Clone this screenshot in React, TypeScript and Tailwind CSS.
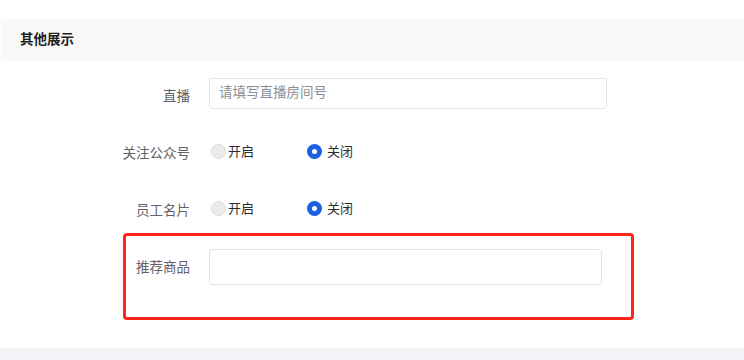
import React from 'react';

const font = { fontFamily: '"Liberation Sans", "Noto Sans CJK SC", sans-serif' };

function Radio({ checked, label }: { checked: boolean; label: string }) {
  return (
    <div className="flex items-center">
      {checked ? (
        <span className="w-[15px] h-[15px] rounded-full bg-[#1b5fe3] flex items-center justify-center">
          <span className="w-[5px] h-[5px] rounded-full bg-white" />
        </span>
      ) : (
        <span className="w-[15px] h-[15px] rounded-full bg-[#ebebec] border border-[#dcdcde]" />
      )}
      <span className={`text-[13px] text-[#2b2b2b] leading-none ${checked ? 'ml-[5px]' : 'ml-[2px]'}`}>{label}</span>
    </div>
  );
}

function Label({ text, className = '' }: { text: string; className?: string }) {
  return (
    <div className={`w-[190px] shrink-0 text-right text-[13.5px] text-[#5f6166] leading-none ${className}`}>{text}</div>
  );
}

export default function App() {
  return (
    <div className="w-[744px] h-[360px] bg-white overflow-hidden pt-[19px] flex flex-col" style={font}>
      <div className="h-[42px] ml-[1px] bg-[#f8f8f8] flex items-center pl-[19px]">
        <span className="text-[13.5px] font-bold text-[#1f1f1f]">其他展示</span>
      </div>

      <div className="mt-[17px] h-[31px] flex items-center">
        <Label text="直播" className="mt-[7px]" />
        <div className="ml-[19px] w-[398px] h-[31px] border border-[#e4e6eb] rounded-[3px] flex items-center pl-[9px]">
          <span className="text-[13.5px] text-[#8c8f94]">请填写直播房间号</span>
        </div>
      </div>

      <div className="mt-[32px] h-[20px] flex items-center">
        <Label text="关注公众号" className="mt-[5px]" />
        <div className="ml-[21px] flex items-center gap-[53px]">
          <Radio checked={false} label="开启" />
          <Radio checked label="关闭" />
        </div>
      </div>

      <div className="mt-[37px] h-[20px] flex items-center">
        <Label text="员工名片" className="mt-[5px]" />
        <div className="ml-[21px] flex items-center gap-[53px]">
          <Radio checked={false} label="开启" />
          <Radio checked label="关闭" />
        </div>
      </div>

      <div className="mt-[15px] ml-[123px] w-[511px] h-[87px] border-[3px] border-[#ff2519] rounded-[4px] pt-[13px]">
        <div className="flex items-center h-[36px]">
          <div className="w-[64px] shrink-0 text-right text-[13.5px] text-[#5f6166] leading-none mt-[2px]">推荐商品</div>
          <div className="ml-[19px] w-[393px] h-[36px] border border-[#dfe2e7] rounded-[3px]" />
        </div>
      </div>

      <div className="mt-[28px] h-[12px] bg-[#f4f5f9]" />
    </div>
  );
}
